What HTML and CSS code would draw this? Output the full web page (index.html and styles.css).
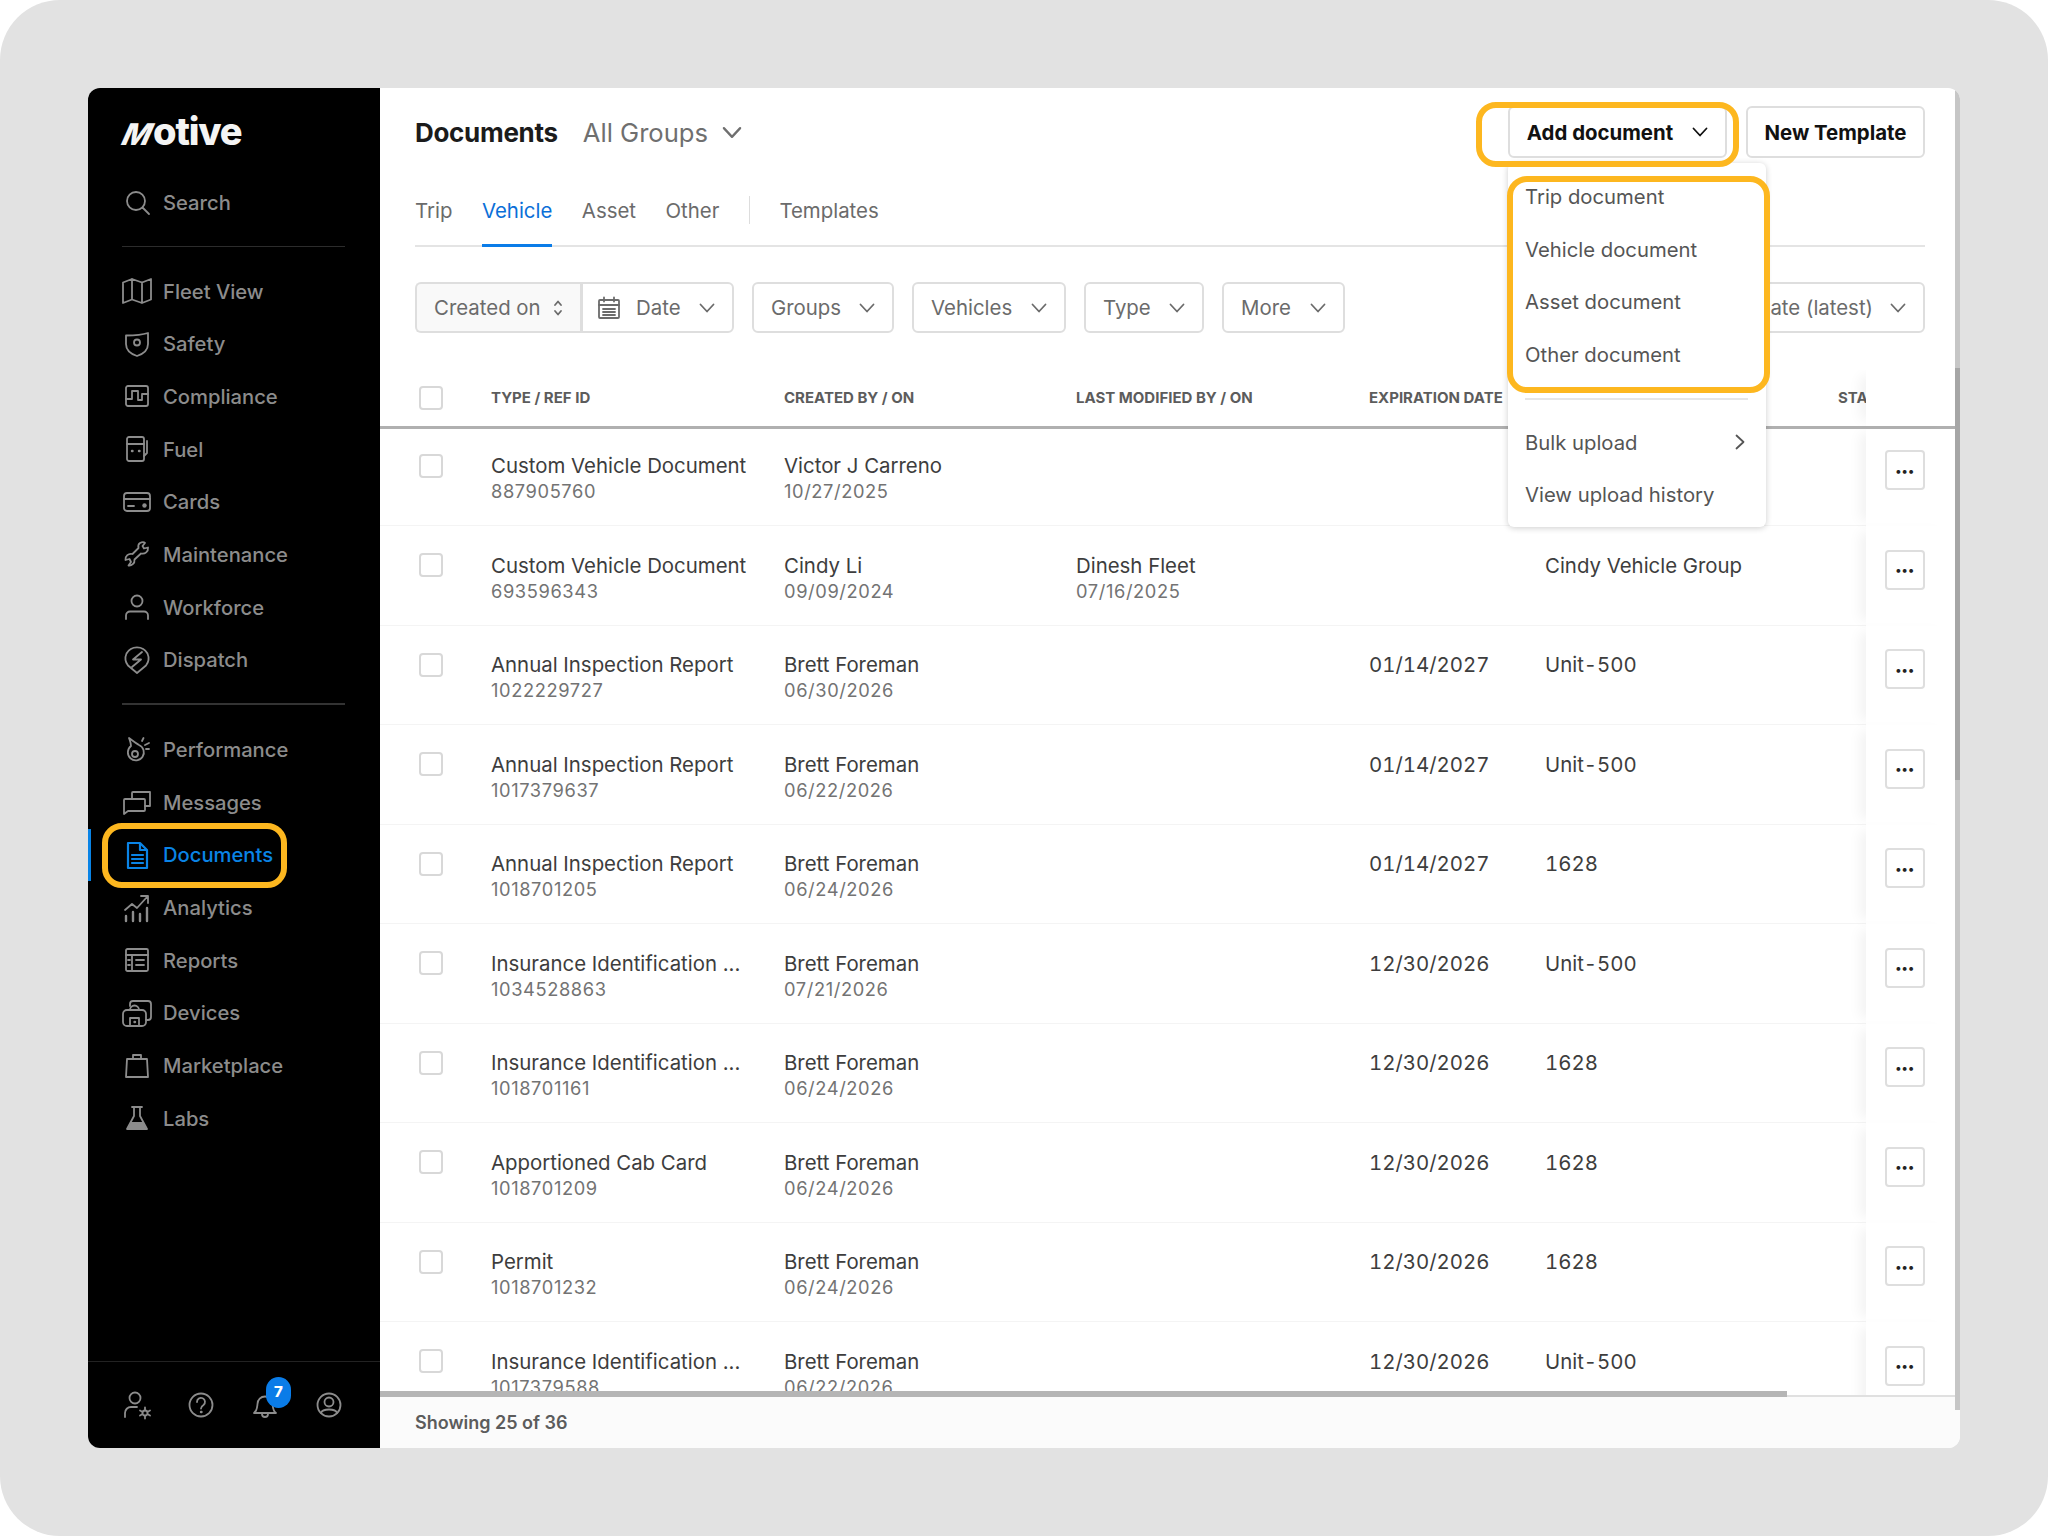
FILE: index.html
```html
<!DOCTYPE html>
<html lang="en">
<head>
    <meta charset="UTF-8">
    <meta name="viewport" content="width=device-width, initial-scale=1.0">
    <title>Documents</title>
    <link rel="stylesheet" href="styles.css">
</head>
<body>
    <svg class="defs" width="0" height="0">
        <symbol id="chev" viewBox="0 0 16 10"><path d="M1.5 1.5 8 8.5l6.5-7"/></symbol>
    </svg>
    <div class="screen">
        <div class="frame">
            <aside class="sidebar">
                <div class="logo"><span class="logo-m">M</span>otive</div>
                <a class="nav-item"><svg viewBox="0 0 30 30"><circle cx="14" cy="14" r="9"/><path d="m20.5 20.5 6.5 6.5"/></svg>Search</a>
                <div class="nav-divider"></div>
                <nav>
                    <a class="nav-item"><svg viewBox="0 0 30 30"><path d="M1 6.500 10 3l10 3.500L29 3v20.500L20 27l-10-3.500L1 27zM10 3v20.500M20 6.500V27"/></svg>Fleet View</a>
                    <a class="nav-item"><svg viewBox="0 0 30 30"><path d="M4 6.500C10 6.500 20 6 26 4v11c0 6-5 10-11 12C9 25 4 21 4 15z"/><circle cx="15" cy="13.500" r="3"/></svg>Safety</a>
                    <a class="nav-item"><svg viewBox="0 0 30 30"><rect x="4" y="5" width="22" height="20" rx="2"/><path d="M4 18h6v-8h6v9h4v-6h6"/></svg>Compliance</a>
                    <a class="nav-item"><svg viewBox="0 0 30 30"><rect x="5" y="3" width="17" height="24" rx="2"/><path d="M5 10h17M25 7v12l-3 3"/><path class="dot" d="M10 17h.5M17 17h.5"/></svg>Fuel</a>
                    <a class="nav-item"><svg viewBox="0 0 30 30"><rect x="2" y="6" width="26" height="18" rx="3"/><path d="M2 12h26M6 19h6"/><circle class="solid" cx="22.500" cy="18.500" r="2.200"/></svg>Cards</a>
                    <a class="nav-item"><svg viewBox="0 0 30 30"><path d="M18 4c2-1 4-1 5 0l-2.500 3 1.500 2.500 4-1c.5 4-3 7-7 6l-6.500 6c.5 4-3 6.500-6 6l2.500-3.500L7.500 20l-4 1c-.5-4 3-7 7-6l6-6c-.5-2 0-4 1.500-5z"/></svg>Maintenance</a>
                    <a class="nav-item"><svg viewBox="0 0 30 30"><circle cx="15" cy="9" r="5.500"/><path d="M4 27v-3.500a4 4 0 0 1 4-4h14a4 4 0 0 1 4 4V27"/></svg>Workforce</a>
                    <a class="nav-item"><svg viewBox="0 0 30 30"><path d="M15 28 6 20.500a12 12 0 0 1-1.500-12A12 12 0 0 1 25.500 8.500a12 12 0 0 1-1.500 12z"/><path d="m20 7-9 7.500h8L10 22"/></svg>Dispatch</a>
                </nav>
                <div class="nav-divider lower"></div>
                <nav>
                    <a class="nav-item"><svg viewBox="0 0 30 30"><path d="M7 3c1 3 2 5 2 8a8 8 0 1 0 8-1c-2-1-6-4-10-7z"/><circle cx="13" cy="19" r="3"/><path d="m20 6 1.500-3M23 10l4-2M24 14h3"/></svg>Performance</a>
                    <a class="nav-item"><svg viewBox="0 0 30 30"><path d="M10 12V6a1 1 0 0 1 1-1h17v14h-5"/><path d="M2 13a1 1 0 0 1 1-1h19a1 1 0 0 1 1 1v10a1 1 0 0 1-1 1H6l-4 3z"/></svg>Messages</a>
                    <a class="nav-item active"><svg viewBox="0 0 30 30"><path d="M6 3h12l7 7v18H6zM18 3v7h7"/><path d="M10 15h11M10 19h11M10 23h11"/></svg>Documents</a>
                    <a class="nav-item"><svg viewBox="0 0 30 30"><path d="m3 17 7-6 5 4 10-11M19 3h7v7"/><path class="bars" d="M4 23v5M11 19v9M18 21v7M25 15v13"/></svg>Analytics</a>
                    <a class="nav-item"><svg viewBox="0 0 30 30"><rect x="4" y="4" width="22" height="22" rx="1.500"/><path d="M4 10h22M10 10v16M14 15h8M14 20h8M6 15h2M6 20h2"/></svg>Reports</a>
                    <a class="nav-item"><svg viewBox="0 0 30 30"><path d="M8 8V6a3 3 0 0 1 3-3h15a3 3 0 0 1 3 3v13a3 3 0 0 1-3 3h-2"/><rect x="1" y="12" width="23" height="16" rx="4"/><path d="M8 28v-8h9v8M8 12a4.500 4.500 0 0 1 9 0"/><path class="dot" d="M12.500 24h.5"/></svg>Devices</a>
                    <a class="nav-item"><svg viewBox="0 0 30 30"><path d="M5 8h20l1 18H4zM11 8V4h8v4"/></svg>Marketplace</a>
                    <a class="nav-item"><svg viewBox="0 0 30 30"><path d="M10 4h10M12 4v9L5 26h20l-7-13V4"/><path class="solid" d="M9 19h12l3 6H6z"/></svg>Labs</a>
                </nav>
                <div class="sidebar-footer">
                    <svg viewBox="0 0 30 30"><circle cx="13" cy="8" r="5.500"/><path d="M3 27v-4a6 6 0 0 1 6-6h6"/><circle cx="23" cy="23" r="2.500"/><path d="M23 17.500v2.500M23 26v2.500M18 20.500l2.200 1.200M25.800 24.300l2.200 1.200M18 25.500l2.200-1.200M25.800 21.700l2.200-1.200"/></svg>
                    <svg viewBox="0 0 30 30"><circle cx="15" cy="15" r="11.500"/><path d="M11 12a4 4 0 1 1 6.500 3c-1.500 1-2.500 2-2.500 3.500"/><path class="dot" d="M15 22h.5"/></svg>
                    <div class="bell">
                        <svg viewBox="0 0 30 30"><path d="M4 23c3-2 3-5 3.500-9a7.500 7.500 0 0 1 15 0c.5 4 .5 7 3.500 9zM12 24a3 3 0 0 0 6 0"/></svg>
                        <span class="badge">7</span>
                    </div>
                    <svg viewBox="0 0 30 30"><circle cx="15" cy="15" r="11.500"/><circle cx="15" cy="12" r="4.500"/><path d="M7 23c1-3 4-3.500 8-3.500s7 .5 8 3.500"/></svg>
                </div>
            </aside>

            <main class="main">
                <header class="top-bar">
                    <h1>Documents</h1>
                    <button class="group-select">All Groups <svg class="chev"><use href="#chev"/></svg></button>
                    <button class="btn add-btn">Add document <svg class="chev"><use href="#chev"/></svg></button>
                    <button class="btn">New Template</button>
                </header>

                <div class="tabs">
                    <a class="tab">Trip</a>
                    <a class="tab active">Vehicle</a>
                    <a class="tab">Asset</a>
                    <a class="tab">Other</a>
                    <span class="tab-divider"></span>
                    <a class="tab">Templates</a>
                </div>

                <div class="filters">
                    <div class="filter-pair">
                        <button class="filter created">Created on
                            <svg class="updown" viewBox="0 0 10 18"><path d="M2 6l3-3.500L8 6M2 12l3 3.500L8 12"/></svg>
                        </button>
                        <button class="filter date">
                            <svg class="cal" viewBox="0 0 24 24"><rect x="2" y="4" width="20" height="18" rx="1"/><path d="M2 9h20M7 1.500v4M17 1.500v4M6 13h12M6 16h12M6 19h12" /></svg>
                            Date <svg class="chev"><use href="#chev"/></svg>
                        </button>
                    </div>
                    <button class="filter f-groups">Groups <svg class="chev"><use href="#chev"/></svg></button>
                    <button class="filter f-vehicles">Vehicles <svg class="chev"><use href="#chev"/></svg></button>
                    <button class="filter f-type">Type <svg class="chev"><use href="#chev"/></svg></button>
                    <button class="filter f-more">More <svg class="chev"><use href="#chev"/></svg></button>
                    <button class="filter sort">Sort by: Date (latest) <svg class="chev"><use href="#chev"/></svg></button>
                </div>

                <div class="table">
                    <div class="row head">
                        <div><span class="check"></span></div>
                        <div>TYPE / REF ID</div>
                        <div>CREATED BY / ON</div>
                        <div>LAST MODIFIED BY / ON</div>
                        <div>EXPIRATION DATE</div>
                        <div>VEHICLE</div>
                        <div class="clip">STATUS</div>
                        <div class="actions"></div>
                    </div>

                    <div class="row">
                        <div><span class="check"></span></div>
                        <div><div class="name">Custom Vehicle Document</div><div class="sub">887905760</div></div>
                        <div><div class="name">Victor J Carreno</div><div class="sub">10/27/2025</div></div>
                        <div></div>
                        <div></div>
                        <div></div>
                        <div></div>
                        <div class="actions"><button class="more">•••</button></div>
                    </div>
                    <div class="row">
                        <div><span class="check"></span></div>
                        <div><div class="name">Custom Vehicle Document</div><div class="sub">693596343</div></div>
                        <div><div class="name">Cindy Li</div><div class="sub">09/09/2024</div></div>
                        <div><div class="name">Dinesh Fleet</div><div class="sub">07/16/2025</div></div>
                        <div></div>
                        <div class="name">Cindy Vehicle Group</div>
                        <div></div>
                        <div class="actions"><button class="more">•••</button></div>
                    </div>
                    <div class="row">
                        <div><span class="check"></span></div>
                        <div><div class="name">Annual Inspection Report</div><div class="sub">1022229727</div></div>
                        <div><div class="name">Brett Foreman</div><div class="sub">06/30/2026</div></div>
                        <div></div>
                        <div class="name num">01/14/2027</div>
                        <div class="name num">Unit-500</div>
                        <div></div>
                        <div class="actions"><button class="more">•••</button></div>
                    </div>
                    <div class="row">
                        <div><span class="check"></span></div>
                        <div><div class="name">Annual Inspection Report</div><div class="sub">1017379637</div></div>
                        <div><div class="name">Brett Foreman</div><div class="sub">06/22/2026</div></div>
                        <div></div>
                        <div class="name num">01/14/2027</div>
                        <div class="name num">Unit-500</div>
                        <div></div>
                        <div class="actions"><button class="more">•••</button></div>
                    </div>
                    <div class="row">
                        <div><span class="check"></span></div>
                        <div><div class="name">Annual Inspection Report</div><div class="sub">1018701205</div></div>
                        <div><div class="name">Brett Foreman</div><div class="sub">06/24/2026</div></div>
                        <div></div>
                        <div class="name num">01/14/2027</div>
                        <div class="name num">1628</div>
                        <div></div>
                        <div class="actions"><button class="more">•••</button></div>
                    </div>
                    <div class="row">
                        <div><span class="check"></span></div>
                        <div><div class="name">Insurance Identification ...</div><div class="sub">1034528863</div></div>
                        <div><div class="name">Brett Foreman</div><div class="sub">07/21/2026</div></div>
                        <div></div>
                        <div class="name num">12/30/2026</div>
                        <div class="name num">Unit-500</div>
                        <div></div>
                        <div class="actions"><button class="more">•••</button></div>
                    </div>
                    <div class="row">
                        <div><span class="check"></span></div>
                        <div><div class="name">Insurance Identification ...</div><div class="sub">1018701161</div></div>
                        <div><div class="name">Brett Foreman</div><div class="sub">06/24/2026</div></div>
                        <div></div>
                        <div class="name num">12/30/2026</div>
                        <div class="name num">1628</div>
                        <div></div>
                        <div class="actions"><button class="more">•••</button></div>
                    </div>
                    <div class="row">
                        <div><span class="check"></span></div>
                        <div><div class="name">Apportioned Cab Card</div><div class="sub">1018701209</div></div>
                        <div><div class="name">Brett Foreman</div><div class="sub">06/24/2026</div></div>
                        <div></div>
                        <div class="name num">12/30/2026</div>
                        <div class="name num">1628</div>
                        <div></div>
                        <div class="actions"><button class="more">•••</button></div>
                    </div>
                    <div class="row">
                        <div><span class="check"></span></div>
                        <div><div class="name">Permit</div><div class="sub">1018701232</div></div>
                        <div><div class="name">Brett Foreman</div><div class="sub">06/24/2026</div></div>
                        <div></div>
                        <div class="name num">12/30/2026</div>
                        <div class="name num">1628</div>
                        <div></div>
                        <div class="actions"><button class="more">•••</button></div>
                    </div>
                    <div class="row">
                        <div><span class="check"></span></div>
                        <div><div class="name">Insurance Identification ...</div><div class="sub">1017379588</div></div>
                        <div><div class="name">Brett Foreman</div><div class="sub">06/22/2026</div></div>
                        <div></div>
                        <div class="name num">12/30/2026</div>
                        <div class="name num">Unit-500</div>
                        <div></div>
                        <div class="actions"><button class="more">•••</button></div>
                    </div>
                    <div class="h-track"><div class="h-thumb"></div></div>
                </div>

                <footer class="table-footer">Showing 25 of 36</footer>
            </main>

            <div class="v-track"><div class="v-thumb"></div></div>

            <div class="menu">
                <a class="menu-item">Trip document</a>
                <a class="menu-item">Vehicle document</a>
                <a class="menu-item">Asset document</a>
                <a class="menu-item">Other document</a>
                <div class="menu-divider"></div>
                <a class="menu-item">Bulk upload <svg class="menu-arrow" viewBox="0 0 10 16"><path d="m1.500 1.500 7 6.500-7 6.500"/></svg></a>
                <a class="menu-item">View upload history</a>
            </div>

            <div class="mark mark-nav"></div>
            <div class="mark mark-add"></div>
            <div class="mark mark-menu"></div>
        </div>
    </div>
</body>
</html>
```

FILE: styles.css
```css
* {
    box-sizing: border-box;
}
body {
    margin: 0;
    background-color: #fff;
    font-family: Inter, "Liberation Sans", sans-serif;
    color: #333;
}
button {
    font-family: inherit;
    cursor: pointer;
}
svg {
    fill: none;
    stroke: currentColor;
    stroke-width: 1.8;
    stroke-linecap: round;
    stroke-linejoin: round;
}
.defs {
    position: absolute;
}
.screen {
    width: 2048px;
    height: 1536px;
    padding: 88px;
    background-color: #e2e2e2;
    border-radius: 60px;
}
.frame {
    position: relative;
    display: flex;
    width: 1872px;
    height: 1360px;
    background-color: #fff;
    border-radius: 12px;
    overflow: hidden;
}

/* sidebar */
.sidebar {
    display: flex;
    flex-direction: column;
    flex: 0 0 292px;
    background-color: #000;
    color: #8c8c8c;
}
.logo {
    height: 88px;
    padding: 19px 0 0 36px;
    font-size: 38px;
    line-height: 48px;
    font-weight: 800;
    letter-spacing: -1.2px;
    color: #f4f4f4;
}
.logo-m {
    display: inline-block;
    font-size: 30px;
    transform: skewX(-24deg);
    margin-right: 2px;
}
.nav-item {
    display: flex;
    align-items: center;
    gap: 11px;
    height: 52.7px;
    padding-left: 34px;
    font-size: 20.2px;
    font-weight: 500;
}
.nav-item svg {
    flex: 0 0 30px;
    width: 30px;
    height: 30px;
}
.nav-item.active {
    color: #0a84e6;
    border-left: 3px solid #0a84e6;
    padding-left: 31px;
}
.nav-item.active svg {
    stroke-width: 2.2;
}
.nav-divider {
    height: 1px;
    margin: 17px 35px 18px 34px;
    background-color: #2c2c2c;
}
.nav-divider.lower {
    height: 2px;
    margin: 17px 35px 18px 34px;
    background-color: #333;
}
.solid {
    fill: currentColor;
    stroke: none;
}
.dot {
    stroke-width: 2.4;
}
.bars {
    stroke-width: 2.4;
}
.sidebar-footer {
    display: flex;
    align-items: center;
    justify-content: space-between;
    margin-top: auto;
    height: 87px;
    padding: 0 36px 0 34px;
    border-top: 1px solid #222;
}
.sidebar-footer svg {
    width: 30px;
    height: 30px;
}
.bell {
    position: relative;
    height: 30px;
}
.badge {
    position: absolute;
    top: -13px;
    left: 16px;
    width: 25px;
    height: 31px;
    border-radius: 13px;
    background-color: #0a7ce8;
    color: #fff;
    font-size: 15px;
    font-weight: 800;
    line-height: 30px;
    text-align: center;
}

/* main column */
.main {
    display: flex;
    flex-direction: column;
    flex: 1;
    min-width: 0;
}
.top-bar {
    display: flex;
    align-items: center;
    gap: 19px;
    height: 70px;
    padding: 18px 35px 0;
}
h1 {
    margin: 0 6px 0 0;
    font-size: 26px;
    font-weight: 700;
    letter-spacing: -0.3px;
    color: #1b1b1b;
}
.group-select {
    display: flex;
    align-items: center;
    gap: 14px;
    margin-right: auto;
    padding: 0;
    border: none;
    background: none;
    font-size: 25.6px;
    color: #6f6f6f;
}
.chev {
    width: 16px;
    height: 10px;
    flex: none;
}
.group-select .chev {
    width: 20px;
    height: 13px;
}
.btn {
    display: flex;
    align-items: center;
    justify-content: center;
    height: 52px;
    width: 179px;
    border: 2px solid #dedede;
    border-radius: 6px;
    background-color: #fff;
    font-size: 20.4px;
    font-weight: 700;
    color: #111;
}
.add-btn {
    width: 219px;
    gap: 19px;
}
.tabs {
    display: flex;
    align-items: stretch;
    height: 69px;
    margin: 20px 35px 0;
    padding-top: 18px;
    border-bottom: 2px solid #e4e4e4;
    gap: 29.5px;
    font-size: 20.4px;
    color: #6b6b6b;
}
.tab {
    padding-top: 2px;
    margin-bottom: -2px;
}
.tab.active {
    color: #0b6fd8;
    border-bottom: 3px solid #0a7ce8;
}
.tab-divider {
    width: 1px;
    height: 28px;
    background-color: #ddd;
}
.filters {
    display: flex;
    gap: 18px;
    height: 51px;
    margin: 35px 35px 0;
}
.filter {
    display: flex;
    align-items: center;
    justify-content: space-between;
    height: 51px;
    padding: 0 17px 0 17px;
    border: 2px solid #dedede;
    border-radius: 6px;
    background-color: #fff;
    font-size: 20.4px;
    color: #6b6b6b;
}
.f-groups {
    width: 142px;
}
.f-vehicles {
    width: 154px;
}
.f-type {
    width: 120px;
}
.f-more {
    width: 123px;
}
.filter-pair {
    display: flex;
}
.filter.created {
    width: 165px;
    padding: 0 17px 0 17px;
    white-space: nowrap;
    background-color: #f9f9f9;
    border-radius: 6px 0 0 6px;
    border-right: none;
}
.filter.date {
    width: 154px;
    padding: 0 17px 0 14px;
    border-radius: 0 6px 6px 0;
    border-left-width: 3px;
    justify-content: flex-start;
    gap: 15px;
}
.date .chev {
    margin-left: auto;
}
.updown {
    width: 10px;
    height: 18px;
    flex: none;
}
.cal {
    width: 24px;
    height: 24px;
    flex: none;
}
.sort {
    margin-left: auto;
    gap: 17px;
    white-space: nowrap;
}

/* table */
.table {
    position: relative;
    flex: 1;
    min-height: 0;
    margin-top: 37px;
    margin-right: 5px;
    overflow: hidden;
}
.row {
    display: grid;
    grid-template-columns: 111px 293px 292px 293px 176px 293px 28px 89px;
    height: 99.5px;
    padding-top: 24.5px;
    border-bottom: 1px solid #f4f4f4;
    font-size: 20.4px;
}
.row > div:first-child {
    padding-left: 39px;
}
.row.head {
    position: relative;
    z-index: 1;
    height: 59px;
    margin-bottom: -2.5px;
    padding-top: 16px;
    border-bottom: 3px solid #b0b0b0;
    font-size: 15px;
    line-height: 24px;
    font-weight: 700;
    color: #5c5c5c;
    white-space: nowrap;
}
.clip {
    overflow: hidden;
}
.check {
    display: block;
    width: 24px;
    height: 24px;
    margin-top: 2.5px;
    border: 2px solid #d8d8d8;
    border-radius: 4px;
    background-color: #fff;
}
.row.head .check {
    margin-top: 0;
}
.name {
    line-height: 29px;
    color: #3d3d3d;
}
.num {
    letter-spacing: 0;
    font-variant-numeric: tabular-nums;
}
.sub {
    font-size: 18.3px;
    line-height: 22px;
    letter-spacing: 0.6px;
    color: #737373;
}
.actions {
    display: flex;
    justify-content: center;
    align-items: flex-start;
    margin-top: -24.5px;
    padding: 23.5px 12px 0 0;
    height: 100px;
    background-color: #fff;
    box-shadow: -12px 0 12px -6px rgba(0, 0, 0, 0.05);
}
.row.head .actions {
    margin-top: -16px;
    height: 56px;
}
.more {
    width: 40px;
    height: 40px;
    padding: 0;
    border: 2px solid #dedede;
    border-radius: 4px;
    background-color: #fff;
    font-size: 12px;
    letter-spacing: -0.4px;
    color: #222;
}
.h-track {
    position: absolute;
    left: 0;
    right: 0;
    bottom: 0;
    height: 6px;
    border-bottom: 2px solid #e0e0e0;
}
.h-thumb {
    width: 1407px;
    height: 6px;
    background-color: #b5b5b5;
}
.table-footer {
    flex: 0 0 51px;
    padding: 0 35px;
    background-color: #fbfbfb;
    font-size: 18px;
    font-weight: 600;
    line-height: 51px;
    color: #5c5c5c;
}
.v-track {
    position: absolute;
    top: 0;
    right: 0;
    width: 5px;
    height: 1322px;
    background-color: #c6c6c6;
}
.v-thumb {
    height: 412px;
    position: relative;
    top: 280px;
    background-color: #a6a6a6;
}

/* add document dropdown */
.menu {
    position: absolute;
    z-index: 2;
    top: 75px;
    left: 1420px;
    width: 258px;
    height: 364px;
    padding-top: 7px;
    border-radius: 6px;
    background-color: #fff;
    box-shadow: 0 1px 6px rgba(0, 0, 0, 0.2);
    font-size: 20.3px;
    color: #555;
}
.menu-item {
    display: flex;
    align-items: center;
    justify-content: space-between;
    height: 52.7px;
    padding: 0 21px 0 17px;
}
.menu-divider {
    height: 2px;
    margin: 17px 18px 16px 17px;
    background-color: #e6e6e6;
}
.menu-arrow {
    width: 10px;
    height: 16px;
}

/* orange callouts drawn over the screenshot */
.mark {
    position: absolute;
    z-index: 3;
    border: 6px solid #fdb71f;
    border-radius: 20px;
}
.mark-nav {
    left: 14px;
    top: 735px;
    width: 185px;
    height: 65px;
}
.mark-add {
    left: 1388px;
    top: 14px;
    width: 263px;
    height: 65px;
}
.mark-menu {
    left: 1419px;
    top: 88px;
    width: 263px;
    height: 217px;
}
```
